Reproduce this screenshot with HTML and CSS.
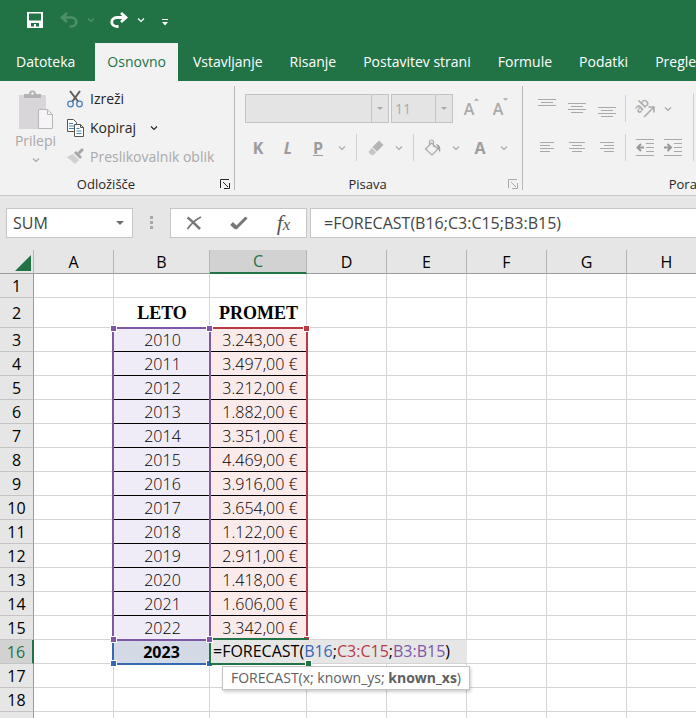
FILE: index.html
```html
<!DOCTYPE html>
<html lang="sl">
<head>
    <meta charset="UTF-8">
    <meta name="viewport" content="width=device-width, initial-scale=1.0">
    <title>FORECAST</title>
    <link rel="stylesheet" href="styles.css">
</head>
<body>
    <svg class="defs" aria-hidden="true">
        <symbol id="chevron" viewBox="0 0 8 8"><path d="M1 2.500 4 5.500l3-3" fill="none" stroke="currentColor" stroke-width="1.200"/></symbol>
        <symbol id="launcher" viewBox="0 0 10 10"><path d="M.5 9V.5H9M3 3l5 5M9.500 4v5.500H4" fill="none" stroke="currentColor"/></symbol>
        <symbol id="triangle" viewBox="0 0 8 4"><path d="M0 0h8L4 4z" fill="currentColor"/></symbol>
    </svg>

    <header>
        <div class="quick-access">
            <button aria-label="Shrani"><svg width="16" height="16" viewBox="0 0 16 16"><path fill="currentColor" fill-rule="evenodd" d="M0 0h16v16H0zM2 1.500v7h12v-7zM4 11v3.500h3V12h2v2.500h3V11z"/></svg></button>
            <div class="split">
                <button class="faded" aria-label="Razveljavi"><svg width="18" height="16" viewBox="0 0 18 16"><path d="M7 1 2 5.500 7 10M2.500 5.500H11c7 0 7 9 0 9H9.500" fill="none" stroke="currentColor" stroke-width="2.600"/></svg></button>
                <button class="more faded" aria-label="Več"><svg><use href="#chevron"/></svg></button>
            </div>
            <div class="split">
                <button aria-label="Uveljavi"><svg width="18" height="16" viewBox="0 0 18 16"><path d="M11 1l5 4.500-5 4.500M15.500 5.500H7c-7 0-7 9 0 9h1.500" fill="none" stroke="currentColor" stroke-width="2.800"/></svg></button>
                <button class="more" aria-label="Več"><svg><use href="#chevron"/></svg></button>
            </div>
            <button class="customize" aria-label="Prilagodi"><svg width="6" height="7" viewBox="0 0 6 7"><path d="M0 0h6v1H0zM0 3h6L3 6.500z" fill="currentColor"/></svg></button>
        </div>
        <nav class="tabs">
            <a href="#">Datoteka</a>
            <a href="#" class="active">Osnovno</a>
            <a href="#">Vstavljanje</a>
            <a href="#">Risanje</a>
            <a href="#">Postavitev strani</a>
            <a href="#">Formule</a>
            <a href="#">Podatki</a>
            <a href="#">Pregled</a>
        </nav>
    </header>

    <div class="ribbon">
        <section class="group clipboard">
            <div class="clipboard-tools">
                <button class="paste" disabled>
                    <svg width="36" height="40" viewBox="0 0 36 40">
                        <path d="M1 5h27v34H1z" fill="#d9d6d9"/>
                        <path d="M6 8V4h5a3.500 3.500 0 0 1 7 0h5v4z" fill="#b3b3b3"/>
                        <circle cx="14.500" cy="3.500" r="1.300" fill="#f2f2f2"/>
                        <path d="M20.500 19.500h9l5 5v14h-14zM29.500 19.500v5h5" fill="#f7f4f8" stroke="#b9b4ba"/>
                    </svg>
                    <span>Prilepi</span>
                    <svg class="chev"><use href="#chevron"/></svg>
                </button>
                <div class="clipboard-list">
                    <button>
                        <svg width="17" height="18" viewBox="0 0 17 18"><path d="M3 1l8.500 11M13 1 5 12" fill="none" stroke="#5c5c5c" stroke-width="2"/><circle cx="3.500" cy="14" r="2.800" fill="none" stroke="#4a80b8" stroke-width="1.300"/><circle cx="12.500" cy="14" r="2.800" fill="none" stroke="#4a80b8" stroke-width="1.300"/></svg>
                        Izreži
                    </button>
                    <button>
                        <svg width="17" height="18" viewBox="0 0 17 18"><path d="M.5.5h6l3 3v9h-9z" fill="#fff" stroke="#555"/><path d="M2 4.500h4M2 7h5M2 9.500h5" stroke="#4a80b8"/><path d="M7.500 5.500h6l3 3v9h-9zM13.500 5.500v3h3" fill="#fff" stroke="#555"/><path d="M9.500 9.500h3M9.500 12h5M9.500 14.500h5" stroke="#4a80b8"/></svg>
                        Kopiraj
                        <svg class="chev"><use href="#chevron"/></svg>
                    </button>
                    <button disabled>
                        <svg width="17" height="18" viewBox="0 0 17 18"><path d="M0 9l6-3 6 6-4 4z" fill="#d0d0d0"/><path d="M7 5l2-2 6 6-2 2z" fill="#a6a6a6"/><path d="M11.500 5.500 16 1" stroke="#a6a6a6" stroke-width="3"/></svg>
                        Preslikovalnik oblik
                    </button>
                </div>
            </div>
            <div class="group-name"><span>Odložišče</span><button aria-label="Odložišče"><svg><use href="#launcher"/></svg></button></div>
        </section>

        <section class="group font">
            <div class="tools">
                <div class="tool-row font-pick">
                    <div class="combo font-name"><select aria-label="Pisava" disabled><option></option></select><span><svg><use href="#triangle"/></svg></span></div>
                    <div class="combo font-size"><select aria-label="Velikost pisave" disabled><option>11</option></select><span><svg><use href="#triangle"/></svg></span></div>
                    <button class="grow" aria-label="Povečaj pisavo" disabled>A<svg viewBox="0 0 6 3"><path d="M0 3h6L3 0z" fill="currentColor"/></svg></button>
                    <button class="grow" aria-label="Pomanjšaj pisavo" disabled>A<svg viewBox="0 0 6 3"><path d="M0 0h6L3 3z" fill="currentColor"/></svg></button>
                </div>
                <div class="tool-row">
                    <button class="letter" disabled>K</button>
                    <button class="letter" disabled><i>L</i></button>
                    <button class="letter" disabled><u>P</u></button>
                    <button class="arrow" aria-label="Več" disabled><svg><use href="#chevron"/></svg></button>
                    <span class="divider"></span>
                    <button class="icon" aria-label="Počisti" disabled><svg width="18" height="18" viewBox="0 0 18 18"><path d="M12 1.500 16.500 6 10 12.500 5.500 8z" fill="#b5b5b5"/><path d="M4.800 8.700 9.300 13.200 6.500 16H4l-2.500-3z" fill="#c6c6c6"/></svg></button>
                    <button class="arrow" aria-label="Več" disabled><svg><use href="#chevron"/></svg></button>
                    <span class="divider"></span>
                    <button class="icon" aria-label="Barva polnila" disabled><svg width="18" height="18" viewBox="0 0 18 18"><path d="M7.500 4 14 10l-6 6-6.500-6zM5.500 7V3a2 2 0 0 1 4 0v5" fill="none" stroke="#a9a9a9" stroke-width="1.200"/><path d="M12 5c4 1 5 3 4 9-1-3-2-5-4-9z" fill="#a0a0a0"/></svg></button>
                    <button class="arrow" aria-label="Več" disabled><svg><use href="#chevron"/></svg></button>
                    <button class="letter" disabled>A</button>
                    <button class="arrow" aria-label="Več" disabled><svg><use href="#chevron"/></svg></button>
                </div>
            </div>
            <div class="group-name"><span>Pisava</span><button aria-label="Pisava" disabled><svg><use href="#launcher"/></svg></button></div>
        </section>

        <section class="group align">
            <div class="tools">
                <div class="tool-row">
                    <button class="letter" aria-label="Poravnaj na vrh" disabled><svg width="18" height="20" viewBox="0 0 18 20"><path d="M0 .5h18M3 3.500h12M0 6.500h18" stroke="currentColor"/></svg></button>
                    <button class="letter" aria-label="Poravnaj na sredino" disabled><svg width="18" height="20" viewBox="0 0 18 20"><path d="M0 4.500h18M3 7.500h12M0 10.500h18M3 13.500h12" stroke="currentColor"/></svg></button>
                    <button class="letter" aria-label="Poravnaj na dno" disabled><svg width="18" height="20" viewBox="0 0 18 20"><path d="M0 8.500h18M3 11.500h12M0 14.500h18M3 17.500h12" stroke="currentColor"/></svg></button>
                    <span class="divider"></span>
                    <button class="icon orientation" aria-label="Usmerjenost" disabled><svg width="20" height="20" viewBox="0 0 20 20"><text x="4" y="15" transform="rotate(-45 4 15)" font-size="13" font-weight="600" fill="currentColor">ab</text><path d="M9 18 18.500 8.500M13.500 8h5.500v5.500" fill="none" stroke="currentColor" stroke-width="1.500"/></svg></button>
                    <button class="arrow" aria-label="Več" disabled><svg><use href="#chevron"/></svg></button>
                </div>
                <div class="tool-row">
                    <button class="letter" aria-label="Levo" disabled><svg width="14" height="14" viewBox="0 0 14 14"><path d="M0 1.500h14M0 4.500h10M0 7.500h14M0 10.500h10" stroke="currentColor"/></svg></button>
                    <button class="letter" aria-label="Na sredino" disabled><svg width="16" height="14" viewBox="0 0 16 14"><path d="M0 1.500h16M3 4.500h10M0 7.500h16M3 10.500h10" stroke="currentColor"/></svg></button>
                    <button class="letter" aria-label="Desno" disabled><svg width="14" height="14" viewBox="0 0 14 14"><path d="M0 1.500h14M4 4.500h10M0 7.500h14M4 10.500h10" stroke="currentColor"/></svg></button>
                    <span class="divider"></span>
                    <button class="icon" aria-label="Zmanjšaj zamik" disabled><svg width="18" height="17" viewBox="0 0 18 17"><path d="M0 .5h18M10 4.500h8M10 8.500h8M10 12.500h8M0 16.500h18" stroke="currentColor"/><path d="M8 8.500H2M5 5 1.500 8.500 5 12" fill="none" stroke="#9a9a9a" stroke-width="2"/></svg></button>
                    <button class="icon" aria-label="Povečaj zamik" disabled><svg width="18" height="17" viewBox="0 0 18 17"><path d="M0 .5h18M10 4.500h8M10 8.500h8M10 12.500h8M0 16.500h18" stroke="currentColor"/><path d="M0 8.500h6M3.500 5 7 8.500 3.500 12" fill="none" stroke="#9a9a9a" stroke-width="2"/></svg></button>
                </div>
            </div>
            <span class="tall-divider"></span>
            <div class="group-name"><span>Poravnava</span></div>
        </section>
    </div>

    <div class="formula-bar">
        <div class="name-box">
            <input type="text" value="SUM" aria-label="Polje z imenom">
            <button aria-label="Imena"><svg><use href="#triangle"/></svg></button>
        </div>
        <svg class="grip" width="3" height="14" viewBox="0 0 3 14"><path d="M0 0h3v3H0zM0 5h3v3H0zM0 10h3v3H0z" fill="#a8a8a8"/></svg>
        <div class="edit-buttons">
            <button aria-label="Prekliči"><svg width="16" height="14" viewBox="0 0 16 14"><path d="M1.500 1.500Q5 4 14 13" fill="none" stroke="#777" stroke-width="2.600"/><path d="M15 1Q7 5 1.500 13" fill="none" stroke="#777" stroke-width="1.800"/></svg></button>
            <button aria-label="Vnesi"><svg width="18" height="14" viewBox="0 0 18 14"><path d="M1.500 7.500 6.500 12" fill="none" stroke="#777" stroke-width="4"/><path d="M5.500 12.500 16.500 1.500" fill="none" stroke="#777" stroke-width="3"/></svg></button>
            <button class="fx" aria-label="Vstavi funkcijo">f<small>x</small></button>
        </div>
        <input class="formula" type="text" value="=FORECAST(B16;C3:C15;B3:B15)" aria-label="Vnosna vrstica">
    </div>

    <main class="sheet">
        <table>
            <colgroup>
                <col class="c-head"><col class="c-std"><col class="c-b"><col class="c-c"><col class="c-std"><col class="c-std"><col class="c-std"><col class="c-std"><col class="c-std"><col>
            </colgroup>
            <thead>
                <tr><th class="corner"><svg width="16" height="16" viewBox="0 0 16 16"><path d="M16 0v16H0z" fill="#217346"/></svg></th><th>A</th><th>B</th><th class="current">C</th><th>D</th><th>E</th><th>F</th><th>G</th><th>H</th><th></th></tr>
            </thead>
            <tbody>
                <tr><th>1</th><td></td><td></td><td></td><td></td><td></td><td></td><td></td><td></td><td></td></tr>
                <tr class="titles"><th>2</th><td></td><td>LETO</td><td>PROMET</td><td></td><td></td><td></td><td></td><td></td><td></td></tr>
                <tr class="data"><th>3</th><td></td><td class="year">2010<div class="range purple"><b></b><b></b><b></b><b></b></div></td><td class="amount">3.243,00 €<div class="range red"><b></b><b></b></div></td><td></td><td></td><td></td><td></td><td></td><td></td></tr>
                <tr class="data"><th>4</th><td></td><td class="year">2011</td><td class="amount">3.497,00 €</td><td></td><td></td><td></td><td></td><td></td><td></td></tr>
                <tr class="data"><th>5</th><td></td><td class="year">2012</td><td class="amount">3.212,00 €</td><td></td><td></td><td></td><td></td><td></td><td></td></tr>
                <tr class="data"><th>6</th><td></td><td class="year">2013</td><td class="amount">1.882,00 €</td><td></td><td></td><td></td><td></td><td></td><td></td></tr>
                <tr class="data"><th>7</th><td></td><td class="year">2014</td><td class="amount">3.351,00 €</td><td></td><td></td><td></td><td></td><td></td><td></td></tr>
                <tr class="data"><th>8</th><td></td><td class="year">2015</td><td class="amount">4.469,00 €</td><td></td><td></td><td></td><td></td><td></td><td></td></tr>
                <tr class="data"><th>9</th><td></td><td class="year">2016</td><td class="amount">3.916,00 €</td><td></td><td></td><td></td><td></td><td></td><td></td></tr>
                <tr class="data"><th>10</th><td></td><td class="year">2017</td><td class="amount">3.654,00 €</td><td></td><td></td><td></td><td></td><td></td><td></td></tr>
                <tr class="data"><th>11</th><td></td><td class="year">2018</td><td class="amount">1.122,00 €</td><td></td><td></td><td></td><td></td><td></td><td></td></tr>
                <tr class="data"><th>12</th><td></td><td class="year">2019</td><td class="amount">2.911,00 €</td><td></td><td></td><td></td><td></td><td></td><td></td></tr>
                <tr class="data"><th>13</th><td></td><td class="year">2020</td><td class="amount">1.418,00 €</td><td></td><td></td><td></td><td></td><td></td><td></td></tr>
                <tr class="data"><th>14</th><td></td><td class="year">2021</td><td class="amount">1.606,00 €</td><td></td><td></td><td></td><td></td><td></td><td></td></tr>
                <tr class="data"><th>15</th><td></td><td class="year">2022</td><td class="amount">3.342,00 €</td><td></td><td></td><td></td><td></td><td></td><td></td></tr>
                <tr>
                    <th class="current">16</th><td></td>
                    <td class="forecast-year">2023<div class="range blue"><b></b><b></b></div></td>
                    <td class="editing">
                        <div class="cell-editor">=FORECAST(<span class="ref-blue">B16</span>;<span class="ref-red">C3:C15</span>;<span class="ref-purple">B3:B15</span>)</div>
                        <div class="range green"><b></b></div>
                        <div class="hint">FORECAST(x; known_ys; <strong>known_xs</strong>)</div>
                    </td>
                    <td></td><td></td><td></td><td></td><td></td><td></td>
                </tr>
                <tr><th>17</th><td></td><td></td><td></td><td></td><td></td><td></td><td></td><td></td><td></td></tr>
                <tr><th>18</th><td></td><td></td><td></td><td></td><td></td><td></td><td></td><td></td><td></td></tr>
                <tr><th></th><td></td><td></td><td></td><td></td><td></td><td></td><td></td><td></td><td></td></tr>
            </tbody>
        </table>
    </main>
</body>
</html>
```
FILE: styles.css
```css
:root {
    --green: #217346;
    --purple: #7e57a8;
    --red: #b83a44;
    --blue: #3568b5;
    --grid: #d4d4d4;
    --chrome: #e6e6e6;
    --disabled: #a9a9a9;
}

* {
    box-sizing: border-box;
}

body {
    margin: 0;
    height: 100vh;
    display: flex;
    flex-direction: column;
    overflow: hidden;
    background: #fff;
    color: #262626;
    font-family: "Open Sans", "Noto Sans", sans-serif;
    font-size: 14px;
}

button, input, select {
    font: inherit;
    color: inherit;
    background: none;
    border: none;
    padding: 0;
    margin: 0;
}

button {
    display: flex;
    align-items: center;
    justify-content: center;
    flex: none;
}

button:disabled {
    color: var(--disabled);
}

svg {
    display: block;
    flex: none;
}

.defs {
    position: absolute;
    width: 0;
    height: 0;
}

/* title bar and tabs */
header {
    flex: none;
    background: var(--green);
    color: #fff;
}

.quick-access {
    display: flex;
    align-items: center;
    gap: 14px;
    height: 43px;
    padding: 0 25px 3px;
}

.quick-access button {
    width: 20px;
    height: 20px;
}

.quick-access .more {
    width: 8px;
}

.quick-access .customize {
    width: 12px;
    padding-top: 4px;
}

.more svg, .chev, .arrow svg {
    width: 8px;
    height: 8px;
}

.split {
    display: flex;
    gap: 8px;
}

.quick-access .faded {
    color: #4d9069;
}

.tabs {
    display: flex;
    gap: 3px;
    padding-left: 4px;
    overflow: hidden;
}

.tabs a {
    flex: none;
    padding: 0 12px;
    line-height: 38px;
    color: #fff;
    text-decoration: none;
    white-space: nowrap;
}

.tabs .active {
    margin-left: 5px;
    background: #f2f2f2;
    color: var(--green);
}

/* ribbon */
.ribbon {
    flex: none;
    display: flex;
    padding: 5px 0;
    background: #f2f2f2;
    border-bottom: 1px solid #c8c8c8;
    overflow: hidden;
}

.group {
    position: relative;
    flex: none;
    display: flex;
    flex-direction: column;
    justify-content: space-between;
    height: 104px;
    border-right: 1px solid #b8b8b8;
}

.clipboard {
    width: 235px;
}

.font {
    width: 288px;
}

.align {
    width: 360px;
}

.group-name {
    display: flex;
    align-items: center;
    gap: 8px;
    height: 12px;
    padding-right: 4px;
    font-size: 13px;
    line-height: 12px;
}

.group-name span {
    flex: 1;
    text-align: center;
}

.group-name button, .group-name svg {
    width: 10px;
    height: 10px;
}

.clipboard-tools {
    display: flex;
    gap: 10px;
    height: 85px;
    padding-left: 14px;
}

.paste {
    flex-direction: column;
    justify-content: flex-start;
    width: 43px;
    padding-top: 4px;
}

.paste span {
    line-height: 22px;
}

.paste .chev {
    margin-top: 4px;
}

.clipboard-list {
    margin-top: -2px;
}

.clipboard-list button {
    gap: 6px;
    height: 29px;
}

.clipboard-list .chev {
    margin-left: 8px;
}

.tools {
    display: flex;
    flex-direction: column;
    gap: 10px;
    padding: 8px 0 0 8px;
}

.tool-row {
    display: flex;
    align-items: center;
    height: 29px;
}

.font-pick {
    gap: 2px;
    padding-left: 2px;
}

.combo {
    display: flex;
    height: 29px;
    background: #e4e4e4;
    border: 1px solid #c3c3c3;
    color: var(--disabled);
}

.combo select {
    flex: 1;
    min-width: 0;
    padding-left: 3px;
    appearance: none;
    opacity: 1;
}

.combo span {
    display: flex;
    align-items: center;
    justify-content: center;
    width: 17px;
    border-left: 1px solid #c3c3c3;
}

.combo svg {
    width: 6px;
    height: 3px;
}

.font-name {
    width: 144px;
}

.font-size {
    width: 62px;
}

.grow {
    width: 27px;
    align-items: flex-start;
    font-size: 16px;
    font-weight: 600;
    padding-left: 6px;
}

.grow svg {
    width: 5px;
    height: 3px;
}

.letter {
    width: 30px;
    height: 29px;
    font-size: 16px;
    font-weight: 700;
}

.font .letter {
    color: #9c9c9c;
}

.arrow {
    width: 18px;
    height: 29px;
}

.icon {
    width: 28px;
    height: 29px;
}

.orientation svg {
    overflow: visible;
}

.divider {
    width: 1px;
    height: 27px;
    margin: 0 5px;
    background: #cfcfcf;
}

.tall-divider {
    position: absolute;
    left: 170px;
    top: 7px;
    width: 1px;
    height: 68px;
    background: #cfcfcf;
}

.align .tools {
    padding-left: 9px;
}

.align .divider {
    margin: 0 5px 0 3px;
}

/* formula bar */
.formula-bar {
    flex: none;
    display: flex;
    align-items: center;
    padding: 12px 0 12px 6px;
    background: var(--chrome);
    font-size: 16px;
    color: #444;
}

.name-box, .edit-buttons, .formula {
    height: 30px;
    background: #fff;
    border: 1px solid #c6c6c6;
}

.name-box {
    display: flex;
    width: 127px;
}

.name-box input {
    flex: 1;
    min-width: 0;
    padding-left: 6px;
}

.name-box button {
    width: 24px;
    color: #707070;
}

.name-box svg {
    width: 8px;
    height: 4px;
}

.grip {
    margin: 0 17px;
}

.edit-buttons {
    display: flex;
    width: 137px;
    margin-right: 3px;
}

.edit-buttons button {
    flex: 1;
}

.edit-buttons .fx {
    font: italic 22px/24px "Liberation Serif", serif;
    color: #555;
}

.fx small {
    font-size: 17px;
    padding-top: 4px;
}

.formula {
    flex: 1;
    min-width: 0;
    border-right: none;
    padding-left: 13px;
}

/* worksheet */
.sheet {
    flex: 1;
    min-height: 0;
    overflow: hidden;
}

table {
    width: 100%;
    min-width: 717px;
    table-layout: fixed;
    border-spacing: 0;
    font-size: 16px;
    line-height: 22px;
    color: #000;
}

.c-head { width: 34px; }
.c-std { width: 80px; }
.c-b { width: 96px; }
.c-c { width: 97px; }

th, td {
    position: relative;
    height: 24px;
    padding: 0;
    border-right: 1px solid var(--grid);
    border-bottom: 1px solid var(--grid);
    text-align: center;
    white-space: nowrap;
}

th {
    background: var(--chrome);
    font-weight: 400;
}

thead th {
    border-right-color: #b4b4b4;
    border-bottom-color: #9b9b9b;
}

tbody th {
    border-right-color: #9b9b9b;
    border-bottom-color: #c4c4c4;
}

.corner svg {
    margin: 3px 2px 0 auto;
}

th.current {
    background: #d2d2d2;
    color: var(--green);
}

thead .current {
    border-bottom: 2px solid var(--green);
}

tbody .current {
    border-right: 2px solid var(--green);
}

.titles th, .titles td {
    height: 30px;
}

.titles td {
    padding: 2px 0 0 1px;
    font: bold 18px "Liberation Serif", serif;
}

.data td {
    padding-left: 2px;
    font-weight: 300;
}

.year, .amount {
    border-bottom-color: #000;
}

.year {
    background: #efecf7;
}

.data .amount {
    padding-left: 4px;
    background: #faeaea;
}

.forecast-year {
    background: #d3dae6;
    font-weight: 700;
}

/* coloured outlines of the referenced ranges */
.range {
    position: absolute;
    z-index: 1;
    left: -2px;
    right: -2px;
    border: 2px solid;
    pointer-events: none;
}

.range b {
    position: absolute;
    width: 7px;
    height: 7px;
    background: currentColor;
    border: 1px solid #fff;
}

.range b:nth-child(1) { right: -4px; bottom: -4px; }
.range b:nth-child(2) { left: -4px; bottom: -4px; }
.range b:nth-child(3) { left: -4px; top: -4px; }
.range b:nth-child(4) { right: -4px; top: -4px; }

.purple, .red {
    top: -1px;
    height: 314px;
}

.purple {
    z-index: 3;
    color: var(--purple);
}

.red {
    left: 1px;
    border-left: none;
    color: var(--red);
}

.red b:nth-child(2) {
    left: auto;
    right: -4px;
    top: -4px;
}

.blue {
    z-index: 2;
    top: -1px;
    bottom: -2px;
    color: var(--blue);
}

.green {
    z-index: 2;
    top: -2px;
    bottom: -2px;
    left: -1px;
    border-right: none;
    color: var(--green);
}

.cell-editor {
    position: absolute;
    z-index: 2;
    left: 0;
    top: 0;
    width: 257px;
    padding-left: 3px;
    background: var(--chrome);
    line-height: 23px;
    text-align: left;
}

.ref-blue { color: var(--blue); }
.ref-red { color: var(--red); }
.ref-purple { color: var(--purple); }

.hint {
    position: absolute;
    z-index: 4;
    left: 12px;
    top: 26px;
    padding: 0 8px;
    background: #fff;
    border: 1px solid #c4c4c4;
    box-shadow: 1px 2px 3px rgba(0, 0, 0, 0.2);
    color: #606060;
    font-size: 14px;
    line-height: 22px;
}
```
